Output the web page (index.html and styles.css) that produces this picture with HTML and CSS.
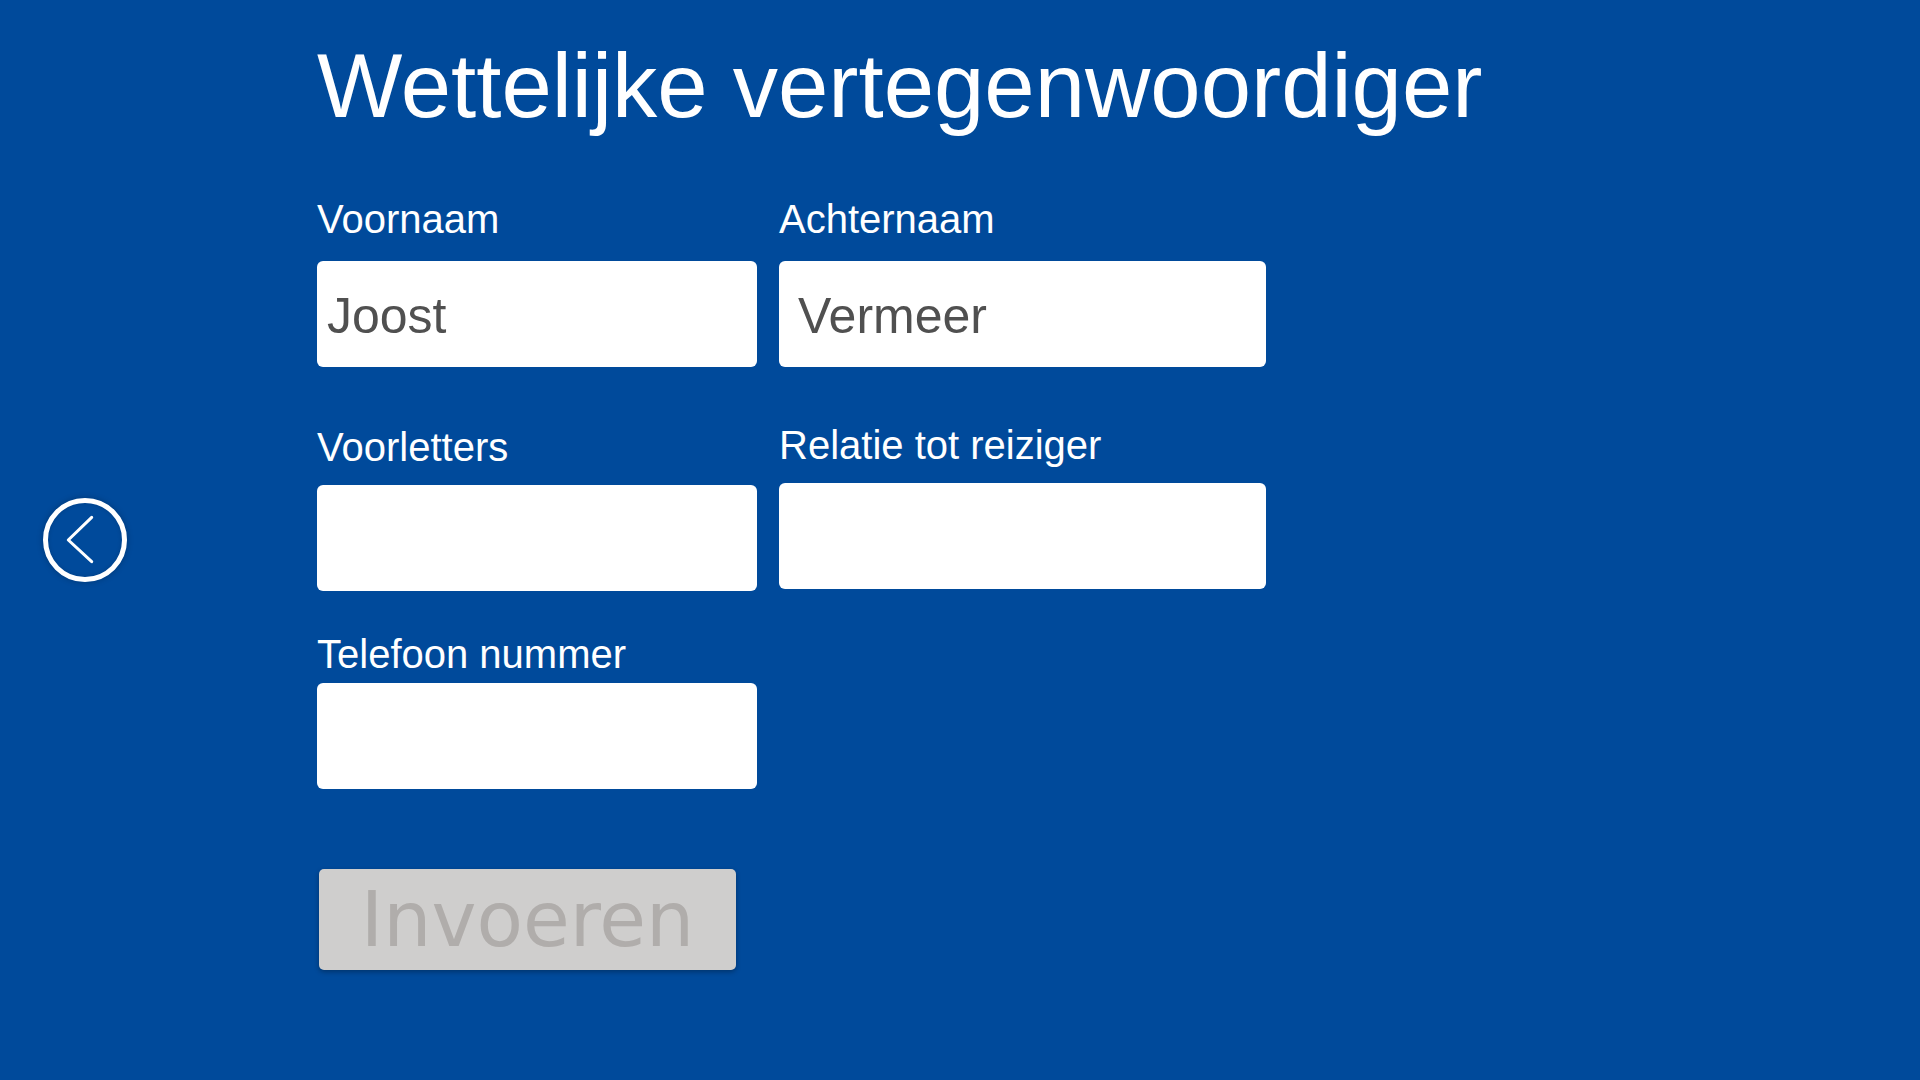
FILE: index.html
```html
<!DOCTYPE html>
<html lang="nl">
<head>
<meta charset="utf-8">
<title>Wettelijke vertegenwoordiger</title>
<link rel="stylesheet" href="styles.css">
</head>
<body>
<div class="page">
  <aside class="nav">
    <button class="back" type="button" aria-label="Terug">
      <svg width="74" height="74" viewBox="0 0 74 74" aria-hidden="true">
        <polyline points="43.7,14.3 20.3,37 43.7,58.7" fill="none" stroke="#fff" stroke-width="3" stroke-linecap="round" stroke-linejoin="round"/>
      </svg>
    </button>
  </aside>
  <main class="main">
    <h1 class="title">Wettelijke vertegenwoordiger</h1>
    <form class="form">
      <div class="col col--left">
        <div class="field">
          <label class="label" for="voornaam">Voornaam</label>
          <input class="input input--first" id="voornaam" type="text" value="Joost">
        </div>
        <div class="field field--row2">
          <label class="label" for="voorletters">Voorletters</label>
          <input class="input input--tight" id="voorletters" type="text" value="">
        </div>
        <div class="field field--row3">
          <label class="label" for="telefoon">Telefoon nummer</label>
          <input class="input input--close" id="telefoon" type="text" value="">
        </div>
        <button class="submit" type="button" disabled>Invoeren</button>
      </div>
      <div class="col col--right">
        <div class="field">
          <label class="label" for="achternaam">Achternaam</label>
          <input class="input input--first input--wide-pad" id="achternaam" type="text" value="Vermeer">
        </div>
        <div class="field field--row2r">
          <label class="label" for="relatie">Relatie tot reiziger</label>
          <input class="input input--tight" id="relatie" type="text" value="">
        </div>
      </div>
    </form>
  </main>
</div>
</body>
</html>
```

FILE: styles.css
```css
* {
  box-sizing: border-box;
}

html, body {
  margin: 0;
  padding: 0;
  height: 100%;
}

body {
  background: #004a9b;
  font-family: "Liberation Sans", Arial, Helvetica, sans-serif;
  color: #fff;
  overflow: hidden;
}

.page {
  display: flex;
  height: 1080px;
}

.nav {
  width: 317px;
  flex: 0 0 317px;
  display: flex;
  align-items: center;
  padding-left: 43px;
}

.back {
  width: 84px;
  height: 84px;
  border: 5px solid #fff;
  border-radius: 50%;
  background: transparent;
  padding: 0;
  display: flex;
  align-items: center;
  justify-content: center;
  box-shadow: 0 0 6px rgba(0, 0, 0, 0.25), inset 0 0 4px rgba(0, 0, 0, 0.15);
  cursor: pointer;
}

.back svg {
  display: block;
}

.main {
  padding-top: 34px;
  flex: 1;
}

.title {
  margin: 0;
  font-weight: normal;
  font-size: 90.5px;
  line-height: 104px;
  color: #fff;
  white-space: nowrap;
}

.form {
  display: flex;
  gap: 22px;
  margin-top: 58px;
}

.col {
  display: flex;
  flex-direction: column;
  align-items: flex-start;
}

.col--left {
  width: 440px;
}

.col--right {
  width: 487px;
}

.field {
  display: flex;
  flex-direction: column;
  width: 100%;
}

.field--row2 {
  margin-top: 57px;
}

.field--row2r {
  margin-top: 55px;
}

.field--row3 {
  margin-top: 40px;
}

.label {
  font-size: 40px;
  line-height: 46px;
  color: #fff;
  white-space: nowrap;
}

.input {
  width: 100%;
  height: 106px;
  border: none;
  border-radius: 6px;
  background: #fff;
  padding: 4px 10px 0 10px;
  margin-top: 19px;
  font-family: "Liberation Sans", Arial, Helvetica, sans-serif;
  font-size: 50px;
  color: #505050;
  outline: none;
}

.input--wide-pad {
  padding-left: 19px;
}

.input--tight {
  margin-top: 15px;
}

.input--close {
  margin-top: 6px;
}

.submit {
  margin-top: 80px;
  margin-left: 2px;
  width: 417px;
  height: 101px;
  border: none;
  border-radius: 5px;
  background: #cfcecd;
  color: #b0adab;
  font-family: "DejaVu Sans", Verdana, sans-serif;
  font-size: 76px;
  line-height: normal;
  padding: 0;
  box-shadow: 0 2px 5px rgba(0, 0, 0, 0.3);
}
```
